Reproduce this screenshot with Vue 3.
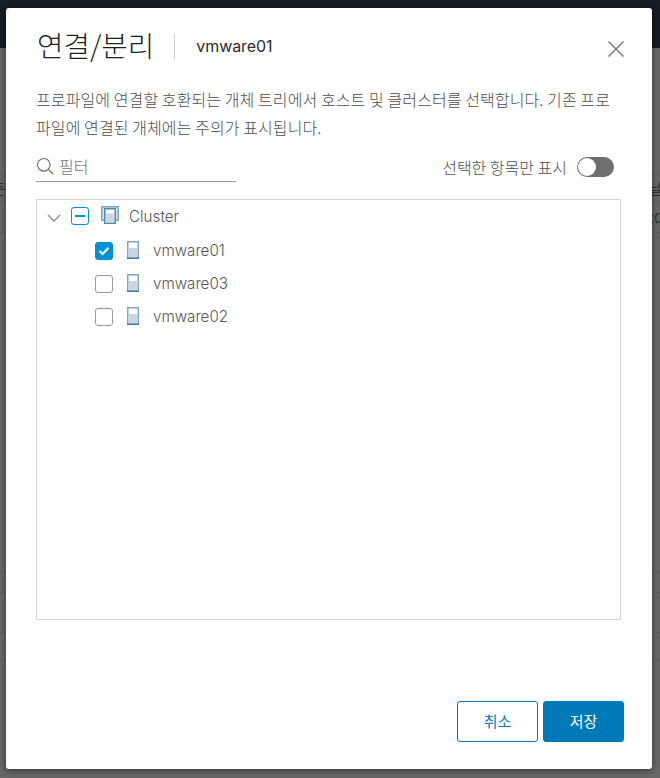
<script setup>
const hosts = [
  { name: 'vmware01', checked: true },
  { name: 'vmware03', checked: false },
  { name: 'vmware02', checked: false },
]
</script>

<template>
  <div class="page">
    <header class="topbar"></header>
    <div class="backdrop">
      <div class="bg-table top">
        <span class="bg-l">준</span><span class="bg-r">날</span>
      </div>
      <div class="bg-table sub">
        <span class="bg-l"></span><span class="bg-r">c0</span>
      </div>
      <div class="bg-rows">
        <div class="bg-row r1"></div>
        <div class="bg-row r2"></div>
        <div class="bg-row r3"></div>
      </div>
    </div>

    <section class="dialog">
      <div class="head">
        <h1>연결/분리</h1>
        <span class="sep"></span>
        <span class="subject">vmware01</span>
        <svg class="close" width="20" height="20" viewBox="0 0 20 20" aria-label="닫기">
          <path d="M2.5 2.5 L17.5 17.5 M17.5 2.5 L2.5 17.5" stroke="#747474" stroke-width="1.4" fill="none" />
        </svg>
      </div>

      <p class="desc">프로파일에 연결할 호환되는 개체 트리에서 호스트 및 클러스터를 선택합니다. 기존 프로<br />파일에 연결된 개체에는 주의가 표시됩니다.</p>

      <div class="tools">
        <label class="filter">
          <svg width="18" height="18" viewBox="0 0 18 18">
            <circle cx="7.8" cy="7.8" r="6.3" stroke="#666" stroke-width="1.1" fill="none" />
            <path d="M12.3 12.3 L17 17" stroke="#666" stroke-width="1.2" fill="none" />
          </svg>
          <span>필터</span>
        </label>
        <div class="only">
          <span>선택한 항목만 표시</span>
          <span class="toggle"><i></i></span>
        </div>
      </div>

      <div class="tree">
        <div class="row root">
          <svg class="caret" width="14" height="8" viewBox="0 0 14 8">
            <path d="M1 1 L7 7 L13 1" stroke="#8c8c8c" stroke-width="1.3" fill="none" />
          </svg>
          <span class="check mixed"><i></i></span>
          <svg class="cluster" width="18" height="18" viewBox="0 0 18 18">
            <rect x="0.75" y="0.75" width="16.5" height="13.5" fill="#d5e2e9" stroke="#7fa8bd" stroke-width="1.5" />
            <rect x="3.75" y="2.75" width="10.5" height="14.5" fill="#fff" stroke="#4f88a6" stroke-width="1.5" />
            <rect x="5" y="7.5" width="8" height="9" fill="#c9d8e0" />
          </svg>
          <span class="label">Cluster</span>
        </div>
        <div v-for="h in hosts" :key="h.name" class="row host">
          <span class="check" :class="{ on: h.checked }">
            <svg v-if="h.checked" width="12" height="10" viewBox="0 0 12 10">
              <path d="M1.5 5 L4.6 8 L10.5 1.8" stroke="#fff" stroke-width="2" fill="none" />
            </svg>
          </span>
          <svg class="server" width="12" height="18" viewBox="0 0 12 18">
            <rect x="0.75" y="0.75" width="10.5" height="16.5" fill="#fff" stroke="#7fa8bd" stroke-width="1.5" />
            <rect x="2" y="7" width="8" height="9" fill="#c9d8e0" />
            <path d="M0 17.25 H12" stroke="#3f7d9e" stroke-width="1.5" />
          </svg>
          <span class="label">{{ h.name }}</span>
        </div>
      </div>

      <footer class="foot">
        <button class="btn ghost">취소</button>
        <button class="btn solid">저장</button>
      </footer>
    </section>
  </div>
</template>

<style>
html, body { margin: 0; background: #666; }
</style>

<style scoped>
.page {
  position: relative;
  width: 660px;
  height: 778px;
  overflow: hidden;
  background: #666;
  font-family: "Inter", "Noto Sans CJK KR", sans-serif;
}
.topbar { height: 48px; background: #151d25; }
.backdrop { color: #2e2e2e; font-size: 14px; padding-top: 126px; }
.bg-table {
  display: flex;
  justify-content: space-between;
  border-top: 1px solid #5c5c5c;
  overflow: hidden;
  font-family: "Noto Sans CJK KR", sans-serif;
}
.top { height: 26px; line-height: 26px; }
.sub { height: 30px; line-height: 30px; }
.bg-l { margin-left: -8px; }
.bg-r { margin-right: -2px; }
.bg-rows { border-top: 1px solid #5c5c5c; margin-top: 0; }
.bg-row { border-top: 1px solid #5c5c5c; box-sizing: border-box; }
.r1 { margin-top: 338px; height: 21px; }
.r2 { height: 40px; }
.r3 { height: 28px; border-bottom: 1px solid #5c5c5c; }
.dialog {
  position: absolute;
  left: 6px;
  top: 8px;
  width: 646px;
  height: 761px;
  box-sizing: border-box;
  padding: 0 28px 27px 30px;
  display: flex;
  flex-direction: column;
  background: #fff;
  border-radius: 3px;
  box-shadow: 0 1px 6px rgba(0, 0, 0, 0.5);
}
.head {
  display: flex;
  align-items: center;
  height: 76px;
  position: relative;
}
h1 {
  margin: -2px 0 0 1px;
  font: 300 28.8px/36px "Noto Sans CJK KR", sans-serif;
  color: #1f1f1f;
}
.sep { width: 1px; height: 25px; background: #ccc; margin: 0 21px 0 20px; }
.subject { font-size: 16px; font-weight: 400; letter-spacing: -0.1px; color: #2b2b2b; }
.close { position: absolute; right: -2px; top: 31px; }
.desc {
  margin: 0;
  padding-top: 1px;
  font: 300 16px/28px "Noto Sans CJK KR", sans-serif;
  letter-spacing: 0.1px;
  color: #4d4d4d;
  white-space: nowrap;
}
.tools {
  display: flex;
  justify-content: space-between;
  align-items: flex-start;
  margin-top: 9px;
  padding-right: 10px;
  height: 49px;
}
.filter {
  width: 200px;
  height: 31px;
  border-bottom: 1px solid #999;
  display: flex;
  align-items: center;
  gap: 5px;
  font: 300 16px "Noto Sans CJK KR", sans-serif;
  color: #737373;
}
.only {
  display: flex;
  align-items: center;
  gap: 10px;
  height: 33px;
  font: 300 16px "Noto Sans CJK KR", sans-serif;
  color: #4d4d4d;
}
.toggle {
  position: relative;
  width: 37px;
  height: 20px;
  margin-top: 1px;
  border-radius: 10px;
  background: #6e6e6e;
}
.toggle i {
  position: absolute;
  left: 1px;
  top: 1px;
  width: 18px;
  height: 18px;
  border-radius: 50%;
  background: #fff;
}
.tree {
  height: 421px;
  margin-right: 3px;
  box-sizing: border-box;
  border: 1px solid #d8d8d8;
}
.row {
  display: flex;
  align-items: center;
  height: 33px;
  font-size: 15.2px;
  font-weight: 300;
  color: #565656;
}
.root { margin-top: -1px; padding-left: 10px; height: 35px; padding-bottom: 1px; box-sizing: border-box; }
.host { padding-left: 58px; }
.caret { margin: 4px 10px 0 0; }
.check {
  width: 18px;
  height: 18px;
  box-sizing: border-box;
  border: 1px solid #999;
  border-radius: 3px;
  display: flex;
  align-items: center;
  justify-content: center;
  flex: none;
}
.check.on { background: #0091d5; border-color: #0091d5; }
.check.mixed { border-color: #0091d5; }
.check.mixed i { width: 10px; height: 2px; background: #0091d5; }
.cluster { margin: -3px 0 0 12px; }
.root .label { margin-left: 10px; }
.server { margin: -2px 0 0 14px; }
.host .label { margin-left: 14px; }
.foot {
  margin-top: auto;
  display: flex;
  justify-content: flex-end;
  gap: 5px;
}
.btn {
  width: 81px;
  height: 41px;
  border-radius: 3px;
  font: 400 15px "Noto Sans CJK KR", sans-serif;
  box-sizing: border-box;
  padding: 0 0 3px;
}
.ghost { background: #fff; border: 1px solid #0079b8; color: #0079b8; }
.solid { background: #0079b8; border: 1px solid #0079b8; color: #fff; }
</style>
